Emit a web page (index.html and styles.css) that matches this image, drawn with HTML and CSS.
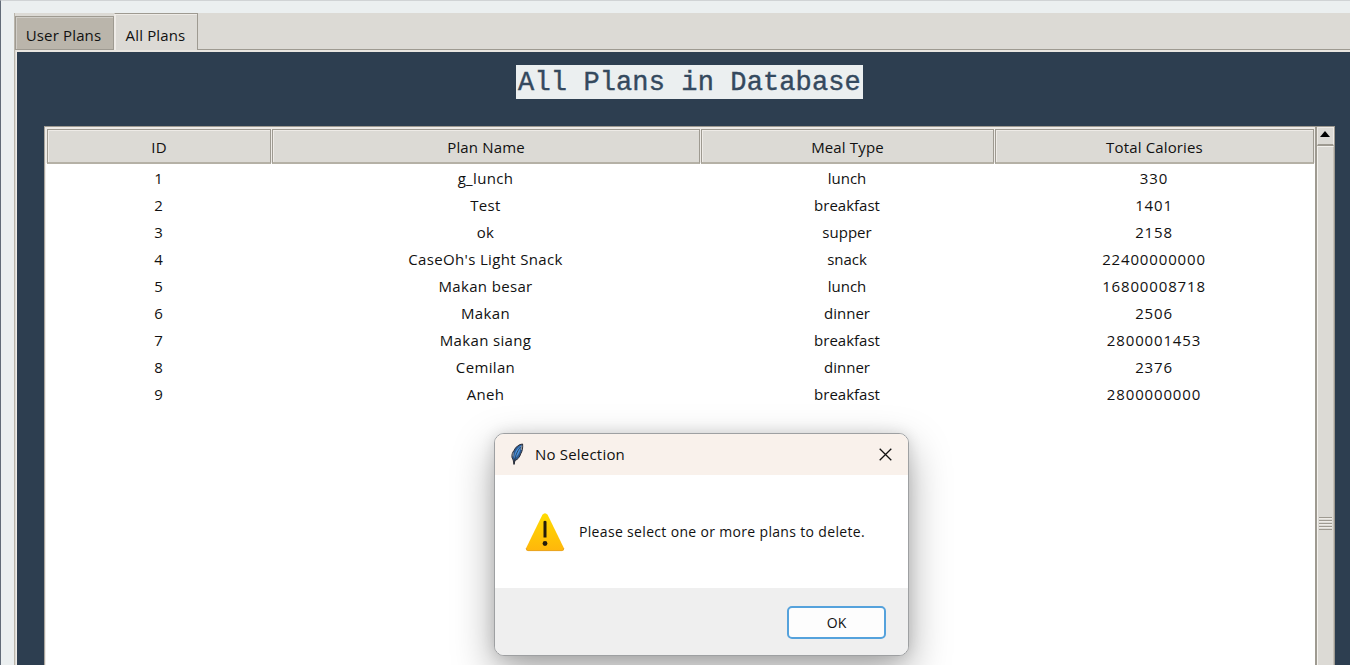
FILE: index.html
```html
<!DOCTYPE html>
<html lang="en">
<head>
<meta charset="utf-8">
<title>All Plans</title>
<link rel="stylesheet" href="styles.css">
</head>
<body>
<main class="window">
  <div class="notebook">
    <nav class="tabs">
      <div class="tab tab-user"><span>User Plans</span></div>
      <div class="tab tab-all"><span>All Plans</span></div>
    </nav>
    <section class="panel">
      <h1 class="title">All Plans in Database</h1>
      <div class="table-wrap">
        <div class="table">
          <div class="row head"><div>ID</div><div>Plan Name</div><div>Meal Type</div><div>Total Calories</div></div>
          <div class="row"><div>1</div><div>g_lunch</div><div>lunch</div><div>330</div></div>
          <div class="row"><div>2</div><div>Test</div><div>breakfast</div><div>1401</div></div>
          <div class="row"><div>3</div><div>ok</div><div>supper</div><div>2158</div></div>
          <div class="row"><div>4</div><div>CaseOh's Light Snack</div><div>snack</div><div>22400000000</div></div>
          <div class="row"><div>5</div><div>Makan besar</div><div>lunch</div><div>16800008718</div></div>
          <div class="row"><div>6</div><div>Makan</div><div>dinner</div><div>2506</div></div>
          <div class="row"><div>7</div><div>Makan siang</div><div>breakfast</div><div>2800001453</div></div>
          <div class="row"><div>8</div><div>Cemilan</div><div>dinner</div><div>2376</div></div>
          <div class="row"><div>9</div><div>Aneh</div><div>breakfast</div><div>2800000000</div></div>
        </div>
        <div class="scrollbar">
          <div class="arrow"><svg width="10" height="6" viewBox="0 0 10 6"><path d="M5 0L10 6H0Z"/></svg></div>
          <div class="thumb"><div class="grip"></div></div>
        </div>
      </div>
    </section>
  </div>
</main>
<div class="dialog" role="alertdialog">
  <header class="dialog-title">
    <svg class="feather" width="14" height="23" viewBox="0 0 14 23">
      <path d="M12.600 1C9 1.200 5.500 4 4 7.500C2.300 9.500 1.600 12 2 14.500L3.200 17L4 21.500L5 17.500C8 16.500 10 13.500 10.600 11C12.300 8.500 13 4.500 12.600 1Z" fill="#2b5a92" stroke="#303038" stroke-width="1"/>
      <path d="M11 2.500C7 5 4.500 9 4.200 15.500C8.500 13 10.500 7 11 2.500Z" fill="#4b94e0"/>
      <path d="M10.500 4C7 8.500 5 13 4.100 21" fill="none" stroke="#26303c" stroke-width=".8"/>
      <path d="M3.200 9.500L3 13.500M11.800 2.500L11.300 7" stroke="#98989b" stroke-width="1"/>
    </svg>
    <span>No Selection</span>
    <svg class="close" width="13" height="13" viewBox="0 0 13 13"><path d="M.7.7L12.300 12.300M12.300.7L.7 12.300" fill="none" stroke="#111" stroke-width="1.300"/></svg>
  </header>
  <div class="dialog-body">
    <svg width="40" height="40" viewBox="0 0 40 40">
      <defs><linearGradient id="warn" x2="0" y2="1"><stop stop-color="#ffdc00"/><stop offset="1" stop-color="#ffb60b"/></linearGradient></defs>
      <path d="M17.400 2.700Q20 -.4 22.600 2.700L38.600 35.500Q39.800 38.900 36.500 39H3.500Q.2 38.900 1.400 35.500Z" fill="url(#warn)"/>
      <path d="M1.200 36Q.8 38.600 3.500 38.600H36.500Q39.200 38.600 38.800 36" fill="none" stroke="#e6a126" stroke-width=".9"/>
      <path d="M18.500 9.500Q20 8 21.500 9.500V25.500H18.500Z" fill="#241d0c"/><circle cx="20" cy="31.500" r="2.400" fill="#241d0c"/>
    </svg>
    <span>Please select one or more plans to delete.</span>
  </div>
  <footer class="dialog-footer"><button class="ok">OK</button></footer>
</div>
</body>
</html>
```

FILE: styles.css
```css
* { box-sizing: border-box; }
body { margin: 0; width: 1350px; height: 665px; overflow: hidden; background: #ebeff0; font: 15px/20px "Open Sans", "Noto Sans", sans-serif; color: #111; }
.window { height: 665px; padding: 12px 0 0 13px; border-left: 1px solid #626b78; border-top: 1px solid #d0d3d5; }
.notebook { height: 652px; background: #dcdad5; border-left: 1px solid #bab5ab; display: flex; flex-direction: column; }
.tabs { height: 37px; flex: none; display: flex; align-items: flex-end; border-bottom: 1px solid #9e9a91; }
.tab { display: flex; justify-content: center; align-items: center; white-space: nowrap; letter-spacing: .15px; }
.tab-user { width: 99px; height: 33px; padding: 4px 2px 0 0; background: #bab5ab; border: 1px solid #9e9a91; border-bottom: 0; box-shadow: inset 1px 1px #d0cdc7; }
.tab-all { width: 84px; height: 37px; margin-bottom: -1px; padding: 5px 1px 0 0; background: #dcdad5; border: 1px solid #9e9a91; border-bottom: 0; border-left-color: #eeebe7; box-shadow: inset 1px 1px #eeebe7; }
.panel { flex: 1; margin-left: 1px; background: #2d3e50; border-top: 2px solid #e8e5e0; border-left: 1px solid #eeebe7; padding: 13px 15px 0 27px; display: flex; flex-direction: column; }
.title { align-self: center; margin: 0 0 27px; width: 347px; height: 34px; background: #ebeff0; color: #34495e; font: 27px/37px "Liberation Mono", monospace; letter-spacing: .12px; text-align: center; white-space: nowrap; -webkit-text-stroke: .4px #34495e; }
.table-wrap { flex: 1; min-height: 0; display: flex; border-top: 1px solid #9e9a91; border-left: 1px solid #aaa69e; }
.table { width: 1271px; background: #fff; border-left: 1px solid #eeebe7; }
.row { display: grid; grid-template-columns: 225px 429px 294px 320px; height: 27px; line-height: 27px; text-align: center; }
.row:not(.head) div:nth-child(2) { letter-spacing: .35px; }
.row:not(.head) div:nth-child(4) { letter-spacing: .85px; }
.head { height: 38px; padding: 2px 0 1px 1px; background: linear-gradient(#eeebe7 36px, #fff 36px); letter-spacing: .15px; }
.head div { background: #dcdad5; border: 1px solid #9e9a91; border-bottom: 2px solid #b5b1a6; margin-right: 1px; box-shadow: inset 1px 1px #eeebe7; line-height: 35px; height: 35px; }
.scrollbar { width: 20px; border-left: 2px solid #9e9a91; border-right: 1px solid #9e9a91; background: #dcdad5; display: flex; flex-direction: column; }
.arrow { height: 19px; flex: none; border: 1px solid #eeebe7; border-bottom: 2px solid #9e9a91; display: flex; justify-content: center; padding: 3px 1px 0 0; }
.thumb { flex: 1; border-left: 1px solid #f3f1ed; border-top: 1px solid #f3f1ed; border-right: 1px solid #c5c1b9; padding: 370px 1px 0; }
.grip { height: 13px; background: repeating-linear-gradient(#9e9a91 0 1px, #eeebe7 1px 2px, #dcdad5 2px 3px); }
.dialog { position: absolute; left: 494px; top: 433px; width: 415px; height: 223px; border: 1px solid #9ea0a2; border-radius: 10px; overflow: hidden; background: #fff; box-shadow: 0 16px 40px rgba(0,0,0,.34), 0 0 14px rgba(0,0,0,.12); display: flex; flex-direction: column; }
.dialog-title { height: 41px; background: #f9f1eb; display: flex; align-items: center; padding: 0 16px 0 15px; }
.dialog-title span { margin: -2px 0 0 11px; letter-spacing: .2px; }
.close { margin-left: auto; }
.dialog-body { height: 113px; display: flex; align-items: center; padding-left: 30px; gap: 14px; font-size: 14px; letter-spacing: .33px; }
.dialog-footer { flex: 1; background: #efefef; display: flex; justify-content: flex-end; padding: 18px 22px 0 0; }
.ok { width: 99px; height: 33px; border: 2px solid #55a2dc; border-radius: 5px; background: #fdfdfd; font: 14px "Open Sans", sans-serif; color: #111; padding: 0 0 1px; }
```
